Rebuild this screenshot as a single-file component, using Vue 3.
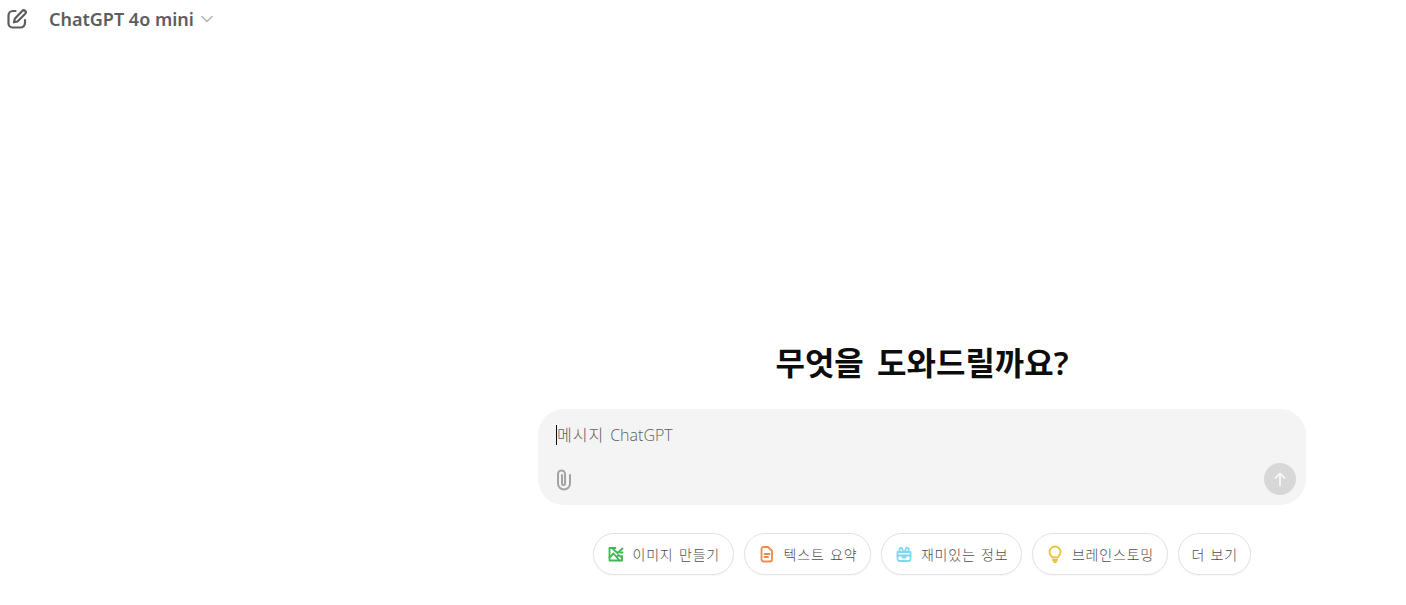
<template>
  <div class="page">
    <header class="topbar">
      <button class="new-chat" aria-label="새 채팅">
        <svg width="22" height="22" viewBox="0 0 22 22" fill="none" stroke="#5d5d5d" stroke-width="2.2" stroke-linecap="round" stroke-linejoin="round">
          <path d="M9.5 3H7a4.5 4.5 0 0 0-4.5 4.5v8A4 4 0 0 0 6.5 19.500h8a4.500 4.500 0 0 0 4.500-4.500v-3" />
          <path d="M16.200 3a2 2 0 0 1 3 2.800L11.500 13.500l-3.500.8.800-3.600z" />
        </svg>
      </button>
      <div class="model">
        <span>ChatGPT 4o mini</span>
        <svg width="14" height="14" viewBox="0 0 14 14" fill="none" stroke="#b4b4b4" stroke-width="1.5" stroke-linecap="round" stroke-linejoin="round">
          <path d="M2 4.500 7 9.500l5-5" />
        </svg>
      </div>
    </header>

    <main class="main">
      <h1 class="title">무엇을 도와드릴까요?</h1>
      <div class="composer">
        <div class="input"><span class="caret"></span><span class="ko">메시지</span><span class="en">ChatGPT</span></div>
        <div class="composer-foot">
          <svg class="clip" width="24" height="24" viewBox="0 0 24 24" fill="none" stroke="#a3a3a3" stroke-width="2" stroke-linecap="round">
            <path d="M18 8v8.500a6 6 0 0 1-12 0V7a3.500 3.500 0 0 1 7 0v9.500a1.500 1.500 0 0 1-3 0V8" />
          </svg>
          <span class="send">
            <svg width="18" height="18" viewBox="0 0 18 18" fill="none" stroke="#f4f4f4" stroke-width="2" stroke-linecap="round" stroke-linejoin="round">
              <path d="M9 15.500V3.500M4.500 8 9 3.500 13.500 8" />
            </svg>
          </span>
        </div>
      </div>
      <div class="chips">
        <button v-for="chip in chips" :key="chip.label" class="chip">
          <svg v-if="chip.icon" width="18" height="18" viewBox="0 0 18 18" fill="none" :stroke="chip.color" stroke-width="1.8" stroke-linecap="round" stroke-linejoin="round">
            <path v-for="d in chip.icon" :key="d" :d="d" />
          </svg>
          <span>{{ chip.label }}</span>
        </button>
      </div>
    </main>
  </div>
</template>

<script setup>
const chips = [
  {
    label: '이미지 만들기',
    color: '#3fb950',
    icon: ['M8.500 3H2.500v12.500h12.500V11', 'M2.500 12.500 6.500 8.500l6 7', 'M10 11.500l1.500-1.500 3.500 2.500', 'M6 4l4.500 4 5-4.500', 'M13 7.500h2.500'],
  },
  {
    label: '텍스트 요약',
    color: '#ee8a4f',
    icon: ['M3.500 4a2 2 0 0 1 2-2h4.500l4 4v8.500a2 2 0 0 1-2 2H5.500a2 2 0 0 1-2-2z', 'M6.500 9h5M6.500 12h3.500'],
  },
  {
    label: '재미있는 정보',
    color: '#80d8ee',
    icon: ['M2.500 7h13v7a2 2 0 0 1-2 2h-9a2 2 0 0 1-2-2z', 'M4.500 7V4.500a1.500 1.500 0 0 1 3 0L8.500 7', 'M9.500 7l2-4.500 2.500 1.500-1 3', 'M2.500 10.500h13', 'M7.500 10.500v2h3v-2'],
  },
  {
    label: '브레인스토밍',
    color: '#e8c340',
    icon: ['M6.500 12.500C5.500 11.500 3.500 10.300 3.500 7a5.500 5.500 0 0 1 11 0c0 3.300-2 4.500-3 5.500z', 'M6.800 15h4.400M8 17h2'],
  },
  { label: '더 보기' },
]
</script>

<style scoped>
.page {
  height: 605px;
  display: flex;
  flex-direction: column;
  background: #fff;
  color: #0d0d0d;
  font-family: "Noto Sans", "Noto Sans CJK KR", sans-serif;
  overflow: hidden;
}

.topbar {
  display: flex;
  align-items: center;
  height: 38px;
  padding-left: 6px;
  gap: 21px;
}

.new-chat {
  display: flex;
  padding: 0;
  border: 0;
  background: none;
}

.model {
  display: flex;
  align-items: center;
  gap: 6px;
  font-size: 18px;
  font-weight: 600;
  color: #5d5d5d;
}

.main {
  flex: 1;
  display: flex;
  flex-direction: column;
  align-items: center;
  margin-left: 438px;
  padding-top: 301px;
}

.title {
  margin: 0 0 23px;
  font-size: 32px;
  line-height: 47px;
  font-weight: 600;
  word-spacing: 5px;
  color: #0d0d0d;
}

.composer {
  width: 768px;
  height: 96px;
  box-sizing: border-box;
  padding: 14px 10px 10px 18px;
  background: #f4f4f4;
  border-radius: 26px;
  display: flex;
  flex-direction: column;
  justify-content: space-between;
}

.input {
  display: flex;
  align-items: center;
  font-size: 16px;
  line-height: 24px;
  font-weight: 300;
  color: #5d5d5d;
}

.ko {
  letter-spacing: 1px;
}

.en {
  margin-left: 6px;
  font-family: "Open Sans", sans-serif;
}

.caret {
  width: 1px;
  height: 20px;
  background: #0d0d0d;
}

.composer-foot {
  display: flex;
  align-items: center;
  justify-content: space-between;
}

.clip {
  margin-left: -4px;
}

.send {
  width: 32px;
  height: 32px;
  border-radius: 50%;
  background: #d7d7d7;
  display: flex;
  align-items: center;
  justify-content: center;
}

.chips {
  display: flex;
  gap: 10px;
  margin-top: 28px;
}

.chip {
  height: 42px;
  box-sizing: border-box;
  display: flex;
  align-items: center;
  gap: 8px;
  padding: 0 12.5px 0 13px;
  background: #fff;
  border: 1px solid #e3e3e3;
  border-radius: 21px;
  box-shadow: 0 1px 2px rgba(0, 0, 0, 0.04);
  font-family: inherit;
  font-size: 14px;
  font-weight: 300;
  letter-spacing: 0.8px;
  word-spacing: 1px;
  color: #4d4d4d;
}
</style>
